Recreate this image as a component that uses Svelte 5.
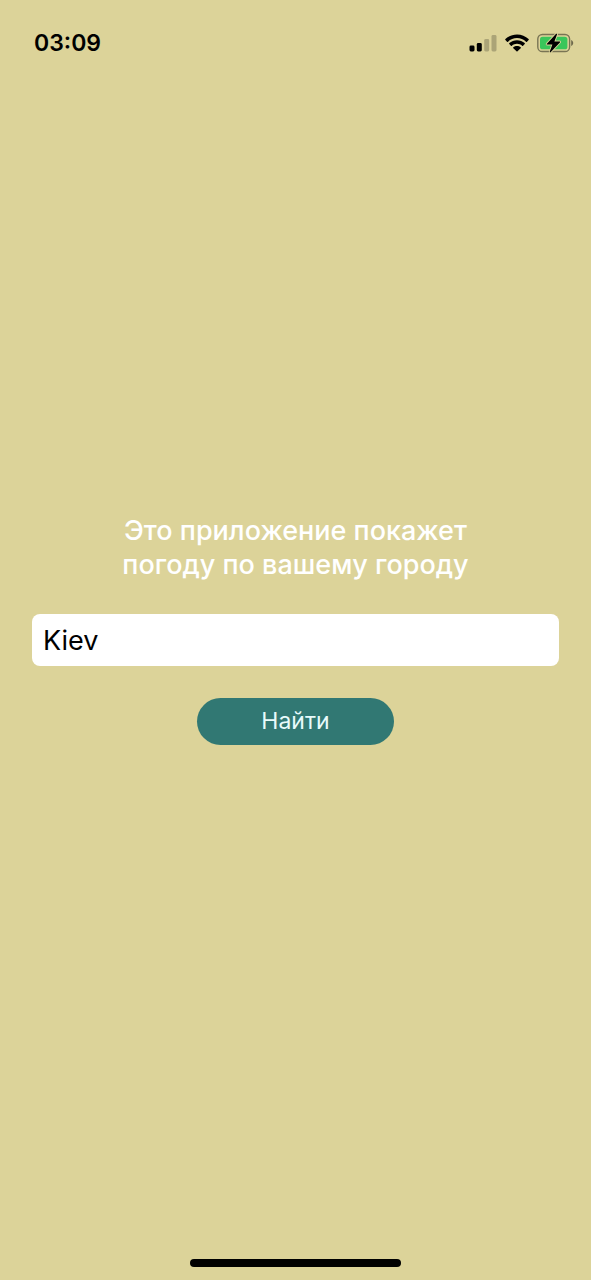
<script>
  let city = $state('Kiev');
</script>

<div class="screen">
  <header class="status">
    <time>03:09</time>
    <div class="indicators">
      <svg width="28" height="18" viewBox="0 0 28 18" role="img" aria-label="Signal">
        <rect x="0.5" y="11.5" width="5" height="6" rx="1.4" />
        <rect x="7.8" y="9" width="5" height="8.5" rx="1.4" />
        <rect x="15.2" y="5" width="5" height="12.5" rx="1.4" opacity="0.22" />
        <rect x="22.5" y="1" width="5" height="16.5" rx="1.4" opacity="0.22" />
      </svg>
      <svg width="24" height="18" viewBox="0 0 24 18" role="img" aria-label="Wi-Fi">
        <path d="M12 0.5C16.5 0.5 20.6 2.2 23.6 5.1C23.9 5.4 23.9 5.8 23.6 6.1L22 7.7C21.7 8 21.3 8 21 7.7C18.5 5.4 15.4 4.1 12 4.1S5.5 5.4 3 7.7C2.7 8 2.3 8 2 7.7L0.4 6.1C0.1 5.8 0.1 5.4 0.4 5.1C3.4 2.2 7.5 0.5 12 0.5Z" />
        <path d="M12 6.2C14.900 6.2 17.600 7.3 19.700 9.1C20 9.4 20 9.8 19.700 10.100L18.100 11.700C17.800 12 17.400 12 17.100 11.700C15.700 10.500 13.900 9.800 12 9.800S8.300 10.500 6.900 11.700C6.600 12 6.200 12 5.900 11.700L4.300 10.100C4 9.800 4 9.400 4.300 9.100C6.400 7.300 9.100 6.200 12 6.200Z" />
        <path d="M12 11.900C13.400 11.900 14.700 12.400 15.700 13.200C16 13.500 16 13.900 15.700 14.200L12.500 17.300C12.200 17.600 11.800 17.600 11.500 17.300L8.300 14.200C8 13.900 8 13.500 8.300 13.200C9.300 12.400 10.600 11.900 12 11.900Z" />
      </svg>
      <svg width="37" height="20" viewBox="0 0 37 20" role="img" aria-label="Battery charging">
        <rect x="0.800" y="1.500" width="31.800" height="17" rx="4.600" fill="none" stroke="#000" stroke-opacity="0.450" stroke-width="1.400" />
        <path d="M34.200 7V13C35.400 12.500 36.200 11.300 36.200 10S35.400 7.500 34.200 7Z" opacity="0.500" />
        <rect x="3" y="3.700" width="27.400" height="12.600" rx="2.600" fill="#39c65a" />
        <path d="M18.900 1L9.900 10.700C9.500 11.200 9.700 11.600 10.300 11.600H15.400L12.800 18.500C12.500 19.300 13.200 19.700 13.800 19.100L22.900 9.400C23.300 8.900 23.100 8.500 22.500 8.500H17.400L20 1.600C20.300 0.800 19.500 0.400 18.900 1Z" stroke="#dcd399" stroke-width="1.800" paint-order="stroke" />
      </svg>
    </div>
  </header>

  <main>
    <form onsubmit={(event) => event.preventDefault()}>
      <label for="city">Это приложение покажет погоду по вашему городу</label>
      <input id="city" type="text" autocomplete="off" bind:value={city} />
      <button type="submit">Найти</button>
    </form>
  </main>

  <footer><div class="home-bar"></div></footer>
</div>

<style>
  :global(body) {
    margin: 0;
    background: #dcd399;
  }

  .screen {
    box-sizing: border-box;
    min-height: 100vh;
    display: flex;
    flex-direction: column;
    background: #dcd399;
    color: #000;
    font-family: Inter, "Liberation Sans", sans-serif;
  }

  .status {
    display: flex;
    align-items: center;
    justify-content: space-between;
    padding: 28px 17px 28px 34px;
  }

  time {
    font-size: 23px;
    line-height: 30px;
    font-weight: 600;
  }

  .indicators {
    display: flex;
    align-items: center;
    gap: 8px;
  }

  svg {
    display: block;
  }

  main {
    flex: 1;
    display: flex;
    flex-direction: column;
    justify-content: center;
    padding: 0 32px;
  }

  form {
    display: flex;
    flex-direction: column;
    align-items: center;
    gap: 32px;
  }

  label {
    max-width: 384px;
    color: #fff;
    font-size: 27px;
    line-height: 34px;
    font-weight: 500;
    text-align: center;
  }

  input {
    box-sizing: border-box;
    width: 100%;
    height: 52px;
    padding: 0 11px;
    border: 0;
    border-radius: 8px;
    outline: 0;
    background: #fff;
    color: #000;
    font: 400 27px/34px Inter, "Liberation Sans", sans-serif;
  }

  button {
    padding: 8px 64px;
    border: 0;
    border-radius: 24px;
    background: #317873;
    color: #e8fbfb;
    font: 400 23px/31px Inter, "Liberation Sans", sans-serif;
    cursor: pointer;
  }

  footer {
    display: flex;
    justify-content: center;
    padding: 86px 0 13px;
  }

  .home-bar {
    width: 211px;
    height: 8px;
    border-radius: 4px;
    background: #000;
  }
</style>
